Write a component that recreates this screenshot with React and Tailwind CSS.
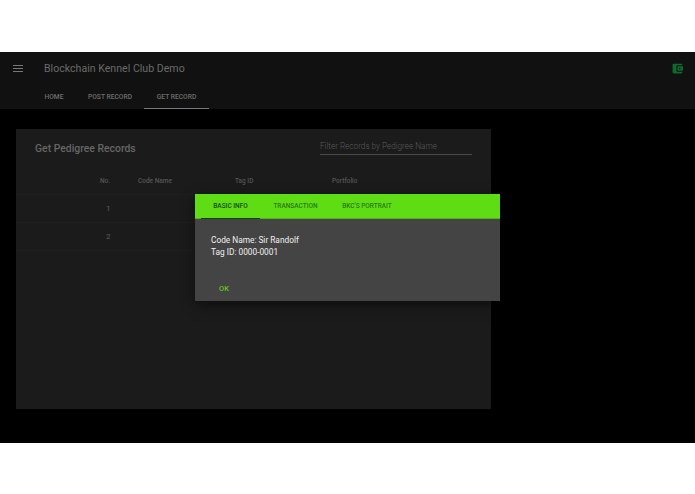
const FONT = "font-['Roboto','Liberation_Sans',sans-serif]"

const NAV = [
  { label: 'HOME', active: false, width: 'w-[60px]' },
  { label: 'POST RECORD', active: false, width: 'w-[52px] mr-[8px]' },
  { label: 'GET RECORD', active: true, width: 'w-[65px]' },
]

const MODAL_TABS = [
  { label: 'BASIC INFO', active: true, width: 'w-[59px]' },
  { label: 'TRANSACTION', active: false, width: 'w-[71px]' },
  { label: "BKC'S PORTRAIT", active: false, width: 'w-[72px]' },
]

function TableRow({ children, header }) {
  return (
    <div className={`flex items-center h-[28px] border-b border-[#1f1f1f] ${header ? 'pt-[2px] text-[6.5px] font-medium text-[#555555]' : 'text-[#5e5e5e] text-[8px]'}`}>
      {children}
    </div>
  )
}

function RecordsCard() {
  return (
    <section className="w-[475px] h-[280px] bg-[#1b1b1b] shadow-[0_0_2px_#000]">
      <div className="flex items-start h-[38px] px-[19px]">
        <h1 className="mt-[12px] text-[10.4px] leading-[16px] font-medium text-[#666666]">Get Pedigree Records</h1>
        <div className="ml-auto mt-[10px] w-[152px] h-[16px] border-b border-[#4a4a4a] text-[8.2px] leading-[14px] font-light text-[#5a5a5a]">
          Filter Records by Pedigree Name
        </div>
      </div>
      <TableRow header>
        <span className="w-[94px] text-right shrink-0">No.</span>
        <span className="w-[125px] pl-[28px] shrink-0">Code Name</span>
        <span className="w-[97px] shrink-0">Tag ID</span>
        <span>Portfolio</span>
      </TableRow>
      <TableRow>
        <span className="w-[94px] pl-[90px]">1</span>
      </TableRow>
      <TableRow>
        <span className="w-[94px] pl-[90px]">2</span>
      </TableRow>
    </section>
  )
}

function InfoModal() {
  return (
    <div className="absolute left-[195px] top-[142px] w-[305px] h-[107px] bg-[#444444] shadow-[0_4px_12px_rgba(0,0,0,0.5)]">
      <div className="flex h-[25px] pl-[6px] bg-[#5fdd14] border-b border-[#4fb512] text-[6.5px] font-medium">
        {MODAL_TABS.map(tab => (
          <div
            key={tab.label}
            className={`${tab.width} h-[25px] pt-[2px] flex items-center justify-center border-b-[1.5px] ${tab.active ? 'border-[#12430a] text-[#174a06]' : 'border-transparent text-[#2a7a10]'}`}
          >
            {tab.label}
          </div>
        ))}
      </div>
      <div className="pl-[16px] pt-[15px] text-[8.3px] leading-[12px] text-[#f0f0f0]">
        <p>Code Name: Sir Randolf</p>
        <p>Tag ID: 0000-0001</p>
      </div>
      <button className="block ml-[24px] mt-[25px] text-[7.5px] leading-[12px] font-medium text-[#68c322]">OK</button>
    </div>
  )
}

export default function App() {
  return (
    <div className={`h-[494px] bg-white pt-[52px] ${FONT}`}>
      <div className="relative h-[391px] bg-black overflow-hidden">
        <header className="h-[57px] bg-[#111111]">
          <div className="flex items-center h-[33px] pl-[13px] pr-[11px]">
            <svg width="10" height="7" viewBox="0 0 10 7" className="text-[#777777]" fill="currentColor">
              <path d="M0 0h10v1H0zM0 3h10v1H0zM0 6h10v1H0z" />
            </svg>
            <span className="ml-[21px] mt-[1px] text-[10.6px] text-[#6a6a6a]">Blockchain Kennel Club Demo</span>
            <svg width="13" height="13" viewBox="0 0 24 24" className="ml-auto text-[#0c6b2c]" fill="currentColor">
              <path d="M21 18v1c0 1.1-.9 2-2 2H5c-1.11 0-2-.9-2-2V5c0-1.1.89-2 2-2h14c1.1 0 2 .9 2 2v1h-9c-1.11 0-2 .9-2 2v8c0 1.1.89 2 2 2h9zm-9-2h10V8H12v8zm4-2.5c-.83 0-1.5-.67-1.5-1.5s.67-1.5 1.5-1.5 1.5.67 1.5 1.5-.67 1.5-1.5 1.5z" />
            </svg>
          </div>
          <nav className="flex h-[24px] pl-[24px] text-[6.7px] font-medium text-[#6e6e6e]">
            {NAV.map(item => (
              <div
                key={item.label}
                className={`${item.width} h-full pt-[2px] flex items-center justify-center border-b ${item.active ? 'border-[#777777]' : 'border-transparent'}`}
              >
                {item.label}
              </div>
            ))}
          </nav>
        </header>
        <main className="pl-[16px] pt-[20px]">
          <RecordsCard />
        </main>
        <InfoModal />
      </div>
    </div>
  )
}
